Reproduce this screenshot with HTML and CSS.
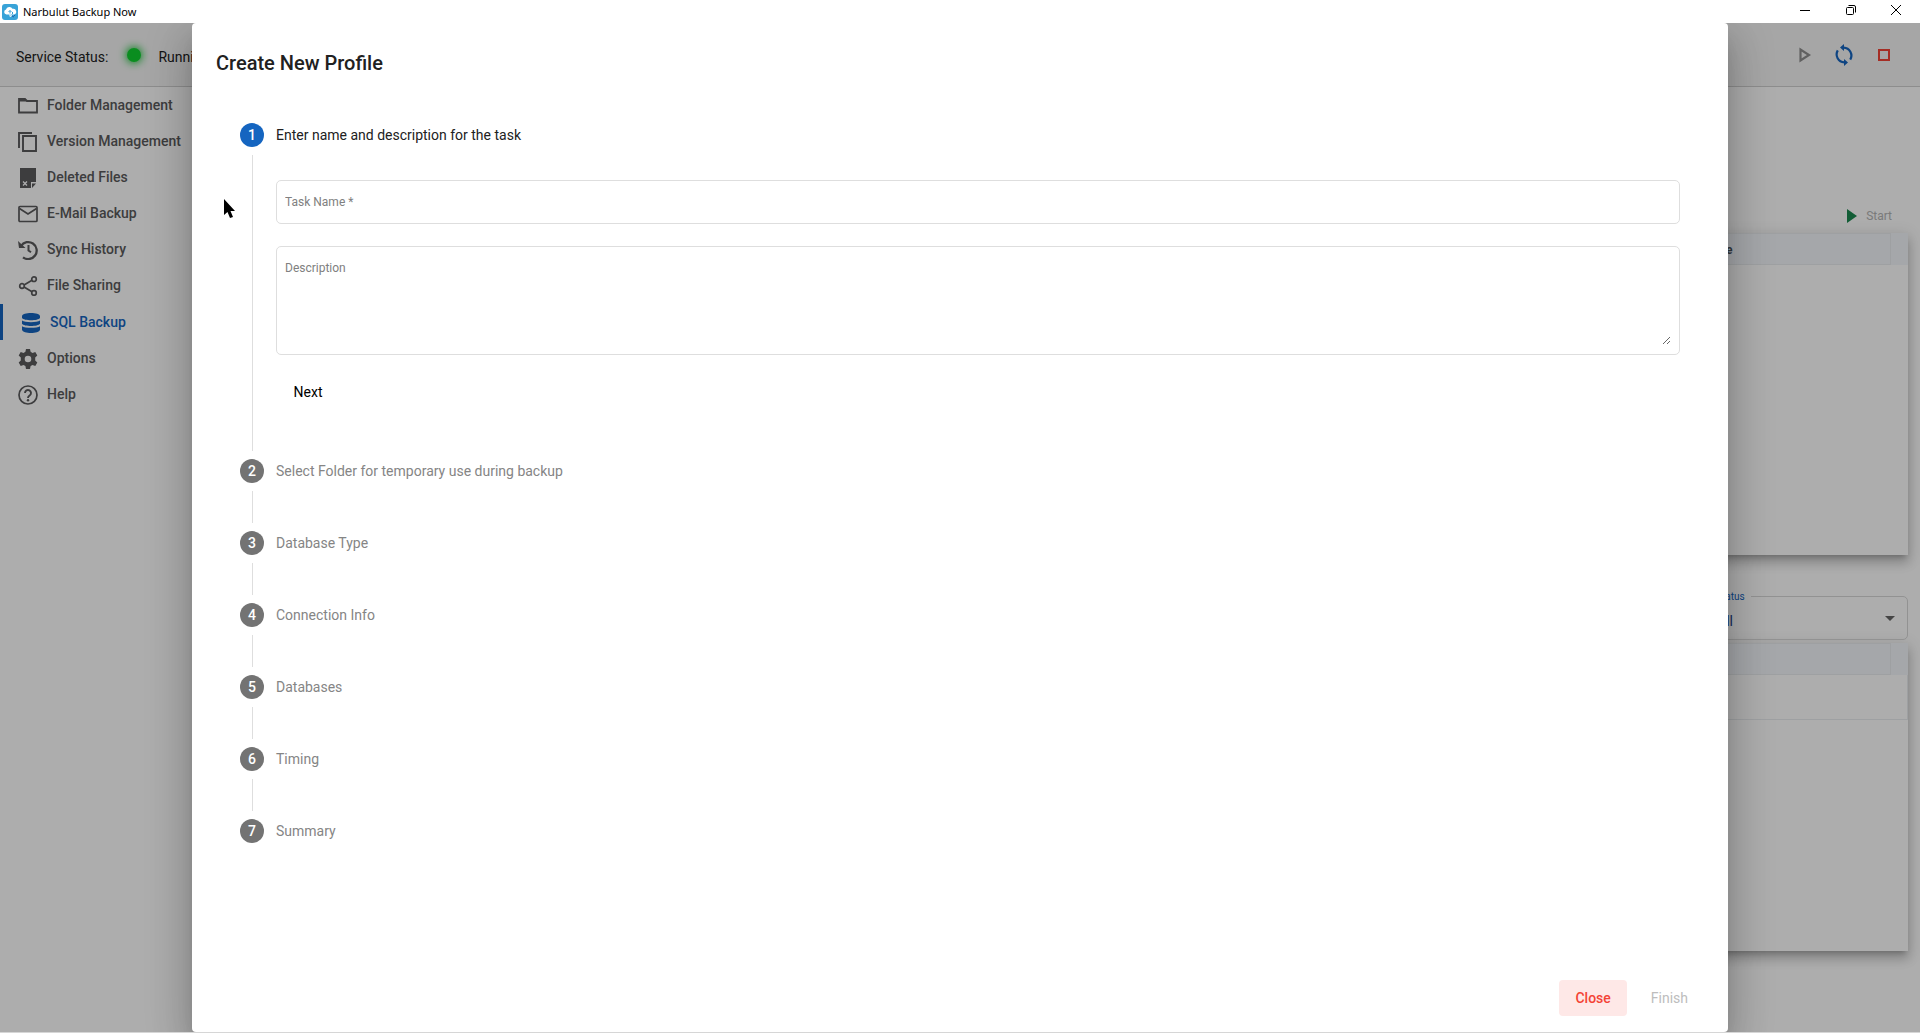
FILE: index.html
```html
<!DOCTYPE html>
<html lang="en">
<head>
<meta charset="utf-8">
<title>Narbulut Backup Now</title>
<link rel="stylesheet" href="styles.css">
</head>
<body>
<header class="titlebar">
  <svg class="app-icon" viewBox="0 0 16 16" aria-hidden="true">
    <rect width="16" height="16" rx="3" fill="#38a3d8"/>
    <path d="M4.500 10.500A2.500 2.500 0 0 1 4 5.600 3.500 3.500 0 0 1 10.500 4.800 2.800 2.800 0 0 1 12 10.500z" fill="#fff"/>
    <path d="M6.500 8l1.500-1.500L9.500 8M8 6.500v3M10.500 8v2" fill="none" stroke="#38a3d8"/>
    <path d="M8 10v2.500l2-1" stroke="#fff" fill="none"/>
    <path d="M10 12l2 1M12 11.500h1" stroke="#1c5fa8"/>
  </svg>
  <span class="app-name">Narbulut Backup Now</span>
  <div class="window-buttons">
    <button aria-label="Minimize"><svg viewBox="0 0 12 12"><path d="M1 6.500h10"/></svg></button>
    <button aria-label="Restore"><svg viewBox="0 0 12 12"><rect x="1.500" y="3.500" width="7" height="7" rx="1"/><path d="M3.500 1.500h5.500a1.500 1.500 0 0 1 1.500 1.500v5.500"/></svg></button>
    <button aria-label="Close window"><svg viewBox="0 0 12 12"><path d="M1 1l10 10M11 1L1 11"/></svg></button>
  </div>
</header>
<div class="app">
  <div class="statusbar">
    <span>Service Status:</span>
    <i class="dot"></i>
    <span>Running</span>
    <div class="service-buttons">
      <button aria-label="Start service"><svg viewBox="0 0 24 24"><path d="M8.500 6.500v11l8.500-5.500z" fill="none" stroke="#8f8f8f" stroke-width="2.200"/></svg></button>
      <button aria-label="Restart service"><svg viewBox="0 0 24 24"><path d="M14 4.800A8 8 0 0 1 16.500 18.300M10 19.200A8 8 0 0 1 7.500 5.700" transform="rotate(-18 12 12)" fill="none" stroke="#1565c0" stroke-width="2.200"/><path d="M12 1v7L8 4.500zM12 16v7l4-3.500z" fill="#1565c0"/></svg></button>
      <button aria-label="Stop service"><svg viewBox="0 0 24 24"><rect x="7" y="7" width="10" height="10" fill="none" stroke="#f44336" stroke-width="2"/></svg></button>
    </div>
  </div>
  <div class="body">
    <nav class="sidebar">
      <a href="#"><svg viewBox="0 0 20 20"><path d="M1 16.500V3h6l2 2h10v11.500z" fill="none" stroke="currentColor" stroke-width="1.800"/><path d="M1 3h6l2 2.500H1z" fill="currentColor"/></svg>Folder Management</a>
      <a href="#"><svg viewBox="0 0 20 20"><path d="M1 16V1h13M5 4h13v15H5z" fill="none" stroke="currentColor" stroke-width="1.900"/></svg>Version Management</a>
      <a href="#"><svg viewBox="0 0 20 20"><path d="M2 0h16v14h-5v6H2z" fill="currentColor"/><path d="M14 20v-4.500h4z" fill="currentColor"/><path d="M5 13.500l4 4M9 13.500l-4 4" stroke="#fff" stroke-width="1.300"/></svg>Deleted Files</a>
      <a href="#"><svg viewBox="0 0 20 20"><rect x="1" y="2.500" width="18" height="15" rx="1" fill="none" stroke="currentColor" stroke-width="1.700"/><path d="M1.500 4.500L10 10l8.500-5.500" fill="none" stroke="currentColor" stroke-width="1.700"/></svg>E-Mail Backup</a>
      <a href="#"><svg viewBox="0 0 20 20"><path d="M3 6A8.500 8.500 0 1 1 5 17.300" fill="none" stroke="currentColor" stroke-width="2.300"/><path d="M0 1l1 7h6.500z" fill="currentColor"/><path d="M10.500 5v5.500l2.500 1.800" fill="none" stroke="currentColor" stroke-width="2"/></svg>Sync History</a>
      <a href="#"><svg viewBox="0 0 20 20"><g fill="none" stroke="currentColor" stroke-width="1.700"><circle cx="4" cy="10" r="2.300"/><circle cx="16" cy="3.200" r="2.300"/><circle cx="16" cy="17" r="2.300"/><path d="M6 9l8-4.700M6 11l8 4.800"/></g></svg>File Sharing</a>
      <a href="#" class="active" aria-current="page"><svg viewBox="0 0 20 20"><path d="M1 3.200C1 -1 19 -1 19 3.200V5C17 8 3 8 1 5zM1 7.500c3 2.200 15 2.200 18 0v3.300c-2 3-16 3-18 0zM1 13.200c3 2.200 15 2.200 18 0v3.500c-1 4.300-17 4.300-18 0z" fill="currentColor"/></svg>SQL Backup</a>
      <a href="#"><svg viewBox="0 0 20 20"><path fill-rule="evenodd" d="M8 0h4l.6 2.800 1.900 1.100 2.800-.9 2 3.500-2.100 2v2.900l2.100 2-2 3.500-2.800-.9-1.900 1.100L12 20H8l-.6-2.900-1.900-1.100-2.800.9-2-3.500 2.100-2V8.500l-2.100-2 2-3.500 2.800.9 1.900-1.100zM10 6.700a3.300 3.300 0 1 0 0 6.600 3.300 3.300 0 0 0 0-6.600z" fill="currentColor"/></svg>Options</a>
      <a href="#"><svg viewBox="0 0 20 20"><g fill="none" stroke="currentColor" stroke-width="1.700"><circle cx="10" cy="10" r="9"/><path d="M7 8a3 3 0 1 1 4.600 2.500C10.500 11.300 10 11.700 10 13" stroke-width="1.900"/></g><circle cx="10" cy="15.300" r="1.200" fill="currentColor"/></svg>Help</a>
    </nav>
    <main class="main">
      <div class="toolbar"><button class="start" disabled><svg viewBox="0 0 10 14" aria-hidden="true"><path d="M0 0v14l10-7z" fill="#1b8a50"/></svg>Start</button></div>
      <div class="card tasks">
        <table>
          <thead><tr><th></th><th class="last">State</th><th class="gutter"></th></tr></thead>
        </table>
      </div>
      <div class="filter">
        <label for="status">Status</label>
        <select id="status"><option>All</option></select>
        <svg viewBox="0 0 10 5" aria-hidden="true"><path d="M0 0h10L5 5z" fill="#666"/></svg>
      </div>
      <div class="card history">
        <table>
          <thead><tr><th></th><th class="last"></th><th class="gutter"></th></tr></thead>
          <tbody><tr><td colspan="3"></td></tr></tbody>
        </table>
      </div>
    </main>
  </div>
  <div class="backdrop">
    <section class="dialog" role="dialog" aria-labelledby="dialog-title">
      <h1 id="dialog-title">Create New Profile</h1>
      <ol class="stepper">
        <li class="current">
          <div class="step"><b>1</b><span>Enter name and description for the task</span></div>
          <form class="step-body">
            <input class="field" type="text" placeholder="Task Name *" aria-label="Task Name" required>
            <div class="field area"><textarea placeholder="Description" aria-label="Description"></textarea></div>
            <button class="btn next" type="button">Next</button>
          </form>
        </li>
        <li><div class="step"><b>2</b><span>Select Folder for temporary use during backup</span></div></li>
        <li><div class="step"><b>3</b><span>Database Type</span></div></li>
        <li><div class="step"><b>4</b><span>Connection Info</span></div></li>
        <li><div class="step"><b>5</b><span>Databases</span></div></li>
        <li><div class="step"><b>6</b><span>Timing</span></div></li>
        <li><div class="step"><b>7</b><span>Summary</span></div></li>
      </ol>
      <footer class="actions">
        <button class="btn close">Close</button>
        <button class="btn" disabled>Finish</button>
      </footer>
    </section>
  </div>
</div>
<svg class="cursor" viewBox="0 0 12 20" aria-hidden="true"><path d="M0 0v16l3.500-3 2.500 6 3-1-2.500-6H11z" fill="#000"/></svg>
</body>
</html>
```
FILE: styles.css
```css
* { box-sizing: border-box; }
body {
  margin: 0;
  height: 100vh;
  display: flex;
  flex-direction: column;
  background: #fff;
  color: #212121;
  font: 14px/20px Roboto, "Liberation Sans", sans-serif;
}
button { border: 0; background: none; padding: 0; font: inherit; color: inherit; }

/* window title bar */
.titlebar { display: flex; align-items: center; height: 23px; padding-left: 2px; flex: none; }
.app-icon { width: 16px; height: 16px; }
.app-name { margin-left: 5px; font: 11px/16px "Noto Sans", sans-serif; color: #000; }
.window-buttons { display: flex; align-self: flex-start; margin-left: auto; height: 20px; }
.window-buttons button { width: 46px; display: grid; place-items: center; }
.window-buttons button:last-child { padding-right: 2px; }
.window-buttons svg { width: 12px; height: 12px; fill: none; stroke: #000; }

/* application behind the dialog */
.app {
  position: relative;
  flex: 1;
  display: flex;
  flex-direction: column;
  overflow: hidden;
  border-bottom: 1px solid #d6d6d6;
}
.statusbar {
  display: flex;
  align-items: center;
  height: 64px;
  padding: 4px 24px 0 16px;
  background: #f5f5f5;
  border-bottom: 1px solid #d0d0d0;
}
.dot {
  width: 14px;
  height: 14px;
  margin: 0 17px 4px 19px;
  border-radius: 50%;
  background: #0fd02f;
  box-shadow: 0 0 8px 1px #0fc02f;
}
.service-buttons { display: flex; gap: 16px; margin-left: auto; padding-bottom: 4px; }
.service-buttons svg { display: block; width: 24px; height: 24px; }
.body { display: flex; flex: 1; }
.sidebar { width: 192px; flex: none; }
.sidebar a {
  display: flex;
  align-items: center;
  gap: 9px;
  height: 36px;
  padding-left: 18px;
  color: #5a5a5c;
  font-weight: 500;
  text-decoration: none;
}
.sidebar svg { width: 20px; height: 20px; margin-top: 2px; }
.sidebar .active { margin-top: 1px; border-left: 3px solid #1565c0; color: #1565c0; }
.main { flex: 1; padding: 116px 12px 0; }
.toolbar { display: flex; justify-content: flex-end; height: 30px; padding-right: 16px; }
.start { display: flex; align-items: center; gap: 9px; height: 26px; font-size: 12px; color: #b4b4b4; }
.start svg { width: 10px; height: 14px; }
.card {
  background: #fff;
  box-shadow: 0 5px 5px -3px rgba(0,0,0,.2), 0 8px 10px 1px rgba(0,0,0,.14), 0 3px 14px 2px rgba(0,0,0,.12);
}
.tasks { height: 322px; }
.history { height: 308px; }
.card table { width: 100%; border-collapse: collapse; table-layout: fixed; }
.card th {
  height: 31px;
  padding: 1px 8px 0;
  background: #f4f7fb;
  border: 1px solid #e9ecef;
  font-size: 12px;
  font-weight: 700;
  text-align: left;
  color: #495057;
}
.card .last { width: 195px; }
.card .gutter { width: 17px; border-color: #f4f7fb; border-left-color: #e9ecef; }
.card td { height: 45px; border: 1px solid #e9ecef; }
.filter {
  position: relative;
  width: 204px;
  height: 44px;
  margin: 41px 0 3px auto;
}
.filter label {
  position: absolute;
  top: -7px;
  left: 8px;
  padding: 0 6px 0 4px;
  background: #fff;
  font-size: 10px;
  line-height: 16px;
  color: #1565c0;
}
.filter select {
  width: 100%;
  height: 100%;
  padding: 6px 12px 0;
  appearance: none;
  border: 1px solid #d8d8d8;
  border-radius: 5px;
  background: none;
  font: inherit;
  color: #1f3f8a;
}
.filter svg { position: absolute; top: 20px; right: 13px; width: 10px; height: 5px; }

/* modal dialog */
.backdrop { position: absolute; inset: 0; display: flex; justify-content: center; background: rgba(0,0,0,.32); }
.dialog {
  display: flex;
  flex-direction: column;
  width: 80%;
  padding: 24px 24px 16px;
  border-radius: 4px;
  background: #fff;
  box-shadow: 0 11px 15px -7px rgba(0,0,0,.2), 0 24px 38px 3px rgba(0,0,0,.14), 0 9px 46px 8px rgba(0,0,0,.12);
}
.dialog h1 { margin: 0 0 20px; font-size: 20px; line-height: 32px; font-weight: 500; }
.stepper { flex: 1; margin: 0; padding: 0 24px; list-style: none; }
.stepper li { position: relative; }
.stepper li:not(:last-child)::after {
  content: "";
  position: absolute;
  top: 56px;
  bottom: -16px;
  left: 12px;
  border-left: 1px solid #dedede;
}
.step { display: flex; align-items: center; gap: 12px; height: 72px; color: #858585; }
.step b {
  width: 24px;
  border-radius: 50%;
  background: #737373;
  color: #fff;
  font-weight: 500;
  line-height: 24px;
  text-align: center;
}
.current .step { color: #212121; }
.current .step b { background: #1565c0; }
.step-body { display: flex; flex-direction: column; align-items: flex-start; height: 264px; padding: 9px 0 0 36px; }
.field { width: 100%; height: 44px; padding: 0 8px; border: 1px solid #dedede; border-radius: 5px; font: inherit; font-size: 12px; }
.area { height: 109px; margin: 22px 0 19px; padding: 8px; }
.area textarea {
  display: block;
  width: 100%;
  height: 90px;
  padding: 3px 0;
  border: 0;
  outline: 0;
  font: inherit;
  resize: vertical;
}
.field::placeholder, textarea::placeholder { color: #808080; }
.btn { min-width: 64px; height: 36px; padding: 0 16px; border-radius: 4px; font-weight: 500; }
.next { font-weight: 400; color: #000; }
.btn:disabled { color: #bdbdbd; font-weight: 400; }
.actions { display: flex; justify-content: flex-end; gap: 8px; }
.close { background: #fee8e7; color: #f44336; }
.cursor { position: absolute; top: 199px; left: 224px; width: 12px; height: 20px; }
```
